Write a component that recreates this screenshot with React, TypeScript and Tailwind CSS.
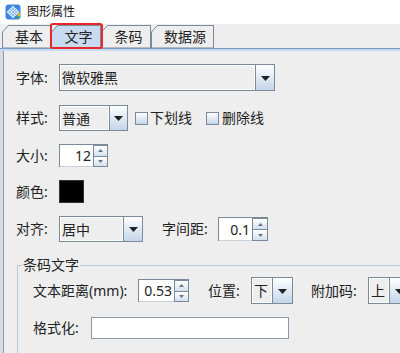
import React from "react";

function Logo() {
  return (
    <svg width="16" height="16" viewBox="0 0 16 16" className="ml-[5px] shrink-0">
      <rect x="0.5" y="0.5" width="15" height="15" rx="3" fill="#3b87de" />
      <g transform="rotate(45 8 8)">
        <rect x="3.5" y="3.5" width="9" height="9" fill="#eaf3ff" />
        <path d="M5.75 3.5V12.5M8 3.5V12.5M10.25 3.5V12.5M3.5 5.75H12.5M3.5 8H12.5M3.5 10.25H12.5" stroke="#6aa6ea" strokeWidth="0.8" />
      </g>
      <rect x="12.5" y="9" width="2.5" height="3" fill="#f2b233" />
      <rect x="12.5" y="12" width="2.5" height="2.5" fill="#4fb04a" />
    </svg>
  );
}

function Tab({ label, selected, w }: { label: string; selected?: boolean; w: string }) {
  return (
    <div className={"relative h-[23px] flex items-center justify-center pl-[5px] text-[14px] leading-none " + w}>
      <svg className="absolute inset-0 w-full h-full" preserveAspectRatio="none">
        <polygon
          points="0.5,23 0.5,7 6.5,0.5 500,0.5 500,23"
          fill={selected ? "#c8daf0" : "#eeeeee"}
          stroke="#7a8a99"
          strokeWidth="1"
        />
      </svg>
      <svg className="absolute right-0 top-0 h-full w-[1px]">
        <line x1="0.5" y1="0" x2="0.5" y2="23" stroke="#7a8a99" />
      </svg>
      <span className="relative">{label}</span>
    </div>
  );
}

function Arrow() {
  return (
    <svg width="9" height="5" viewBox="0 0 9 5" className="mt-[1px]">
      <path d="M0 0H9L4.5 5Z" fill="#222" />
    </svg>
  );
}

function SmallArrow({ up }: { up?: boolean }) {
  return (
    <svg width="5" height="3" viewBox="0 0 5 3">
      <path d={up ? "M0 3H5L2.5 0Z" : "M0 0H5L2.5 3Z"} fill="#6a7480" />
    </svg>
  );
}

function Label({ text, w }: { text: string; w: string }) {
  return <span className={"shrink-0 text-[14px] leading-none whitespace-nowrap " + w}>{text}</span>;
}

export default function App() {
  return (
    <div className="w-[400px] h-[353px] overflow-hidden bg-[#eeeeee] text-[#222222] font-['Noto_Sans','Noto_Sans_CJK_SC',sans-serif]">
      {/* title bar */}
      <div className="h-[24px] bg-white flex items-center">
        <Logo />
        <span className="ml-[6px] text-[12px] leading-none text-[#111]">图形属性</span>
      </div>

      {/* tab strip */}
      <div className="relative h-[25px] flex items-end pl-[2px] border-b border-[#7d97c4]">
        <Tab label="基本" w="w-[49px]" />
        <Tab label="文字" w="w-[50px]" selected />
        <Tab label="条码" w="w-[50px]" />
        <Tab label="数据源" w="w-[63px]" />
        <div className="absolute left-[50px] top-[-1px] w-[53px] h-[26px] border-2 border-[#e8262b] rounded-[3px]" />
      </div>

      {/* content */}
      <div className="h-[304px] border-t-2 border-[#c8daf0] flex">
        <div className="w-[3px] shrink-0 bg-[#d8dce2]" />
        <div className="flex-1 border-l border-[#8a9ab0] flex flex-col">
          {/* 字体 */}
          <div className="mt-[13px] h-[27px] flex items-center pl-[12px]">
            <Label text="字体:" w="w-[43px]" />
            <div className="w-[216px] h-[27px] flex border border-[#7a8a99]">
              <div className="flex-1 flex items-center pl-[2px] text-[14px] bg-[#eeeeee] shadow-[inset_1px_1px_0_#ffffff,inset_-1px_-1px_0_#ffffff]">微软雅黑</div>
              <div className="w-[19px] flex items-center justify-center border-l border-[#7a8a99] bg-linear-to-b from-white to-[#c3d5ea]"><Arrow /></div>
            </div>
          </div>

          {/* 样式 */}
          <div className="mt-[14px] h-[26px] flex items-center pl-[12px]">
            <Label text="样式:" w="w-[43px]" />
            <div className="w-[69px] h-[26px] flex border border-[#7a8a99]">
              <div className="flex-1 flex items-center pl-[2px] text-[14px] bg-[#eeeeee] shadow-[inset_1px_1px_0_#ffffff,inset_-1px_-1px_0_#ffffff]">普通</div>
              <div className="w-[18px] flex items-center justify-center border-l border-[#7a8a99] bg-linear-to-b from-white to-[#c3d5ea]"><Arrow /></div>
            </div>
            <div className="ml-[7px] w-[13px] h-[13px] border border-[#7a8a99] bg-linear-to-b from-white to-[#c5d6ea]" />
            <span className="ml-[2px] text-[14px] leading-none">下划线</span>
            <div className="ml-[14px] w-[13px] h-[13px] border border-[#7a8a99] bg-linear-to-b from-white to-[#c5d6ea]" />
            <span className="ml-[3px] text-[14px] leading-none">删除线</span>
          </div>

          {/* 大小 */}
          <div className="mt-[13px] h-[23px] flex items-center pl-[12px]">
            <Label text="大小:" w="w-[43px]" />
            <div className="w-[49px] h-[23px] flex border-t border-l border-[#7a8a99]">
              <div className="flex-1 flex items-center justify-end pr-[2px] text-[14px] bg-white border-b border-[#c8d0da]">12</div>
              <div className="w-[15px] flex flex-col">
                <div className="flex-1 flex items-center justify-center border border-[#7a8a99] bg-linear-to-b from-white to-[#d3e0ee]"><SmallArrow up /></div>
                <div className="flex-1 flex items-center justify-center border border-t-0 border-[#7a8a99] bg-linear-to-b from-white to-[#d3e0ee]"><SmallArrow /></div>
              </div>
            </div>
          </div>

          {/* 颜色 */}
          <div className="mt-[13px] h-[23px] flex items-center pl-[12px]">
            <Label text="颜色:" w="w-[43px]" />
            <div className="w-[25px] h-[23px] bg-black border border-[#333]" />
          </div>

          {/* 对齐 */}
          <div className="mt-[13px] h-[26px] flex items-center pl-[12px]">
            <Label text="对齐:" w="w-[43px]" />
            <div className="w-[84px] h-[26px] flex border border-[#7a8a99]">
              <div className="flex-1 flex items-center pl-[2px] text-[14px] bg-[#eeeeee] shadow-[inset_1px_1px_0_#ffffff,inset_-1px_-1px_0_#ffffff]">居中</div>
              <div className="w-[19px] flex items-center justify-center border-l border-[#7a8a99] bg-linear-to-b from-white to-[#c3d5ea]"><Arrow /></div>
            </div>
            <span className="ml-[19px] w-[56px] text-[14px] leading-none">字间距:</span>
            <div className="w-[50px] h-[24px] flex border-t border-l border-[#7a8a99]">
              <div className="flex-1 flex items-center justify-end pr-[2px] text-[14px] bg-white border-b border-[#c8d0da]">0.1</div>
              <div className="w-[16px] flex flex-col">
                <div className="flex-1 flex items-center justify-center border border-[#7a8a99] bg-linear-to-b from-white to-[#d3e0ee]"><SmallArrow up /></div>
                <div className="flex-1 flex items-center justify-center border border-t-0 border-[#7a8a99] bg-linear-to-b from-white to-[#d3e0ee]"><SmallArrow /></div>
              </div>
            </div>
          </div>

          {/* 条码文字 group */}
          <div className="relative mt-[23px] ml-[13px] flex-1 border-t border-l border-[#b8c8dc]">
            <span className="absolute left-[4px] top-[-10px] px-[1px] bg-[#eeeeee] text-[14px] leading-[18px]">条码文字</span>

            <div className="mt-[11px] h-[27px] flex items-center pl-[15px] whitespace-nowrap">
              <Label text="文本距离(mm):" w="w-[105px]" />
              <div className="shrink-0 w-[51px] h-[23px] flex border-t border-l border-[#7a8a99]">
                <div className="flex-1 flex items-center justify-end pr-[2px] text-[14px] bg-white border-b border-[#c8d0da]">0.53</div>
                <div className="w-[15px] flex flex-col">
                  <div className="flex-1 flex items-center justify-center border border-[#7a8a99] bg-linear-to-b from-white to-[#d3e0ee]"><SmallArrow up /></div>
                  <div className="flex-1 flex items-center justify-center border border-t-0 border-[#7a8a99] bg-linear-to-b from-white to-[#d3e0ee]"><SmallArrow /></div>
                </div>
              </div>
              <span className="ml-[19px] w-[43px] shrink-0 text-[14px] leading-none">位置:</span>
              <div className="shrink-0 w-[42px] h-[27px] flex border border-[#7a8a99]">
                <div className="flex-1 flex items-center pl-[2px] text-[14px] bg-[#eeeeee] shadow-[inset_1px_1px_0_#ffffff,inset_-1px_-1px_0_#ffffff]">下</div>
                <div className="w-[20px] flex items-center justify-center border-l border-[#7a8a99] bg-linear-to-b from-white to-[#c3d5ea]"><Arrow /></div>
              </div>
              <span className="ml-[18px] w-[57px] shrink-0 text-[14px] leading-none">附加码:</span>
              <div className="shrink-0 w-[42px] h-[27px] flex border border-[#7a8a99]">
                <div className="flex-1 flex items-center pl-[2px] text-[14px] bg-[#eeeeee] shadow-[inset_1px_1px_0_#ffffff,inset_-1px_-1px_0_#ffffff]">上</div>
                <div className="w-[20px] flex items-center justify-center border-l border-[#7a8a99] bg-linear-to-b from-white to-[#c3d5ea]"><Arrow /></div>
              </div>
            </div>

            <div className="mt-[13px] h-[22px] flex items-center pl-[15px]">
              <Label text="格式化:" w="w-[58px]" />
              <div className="w-[198px] h-[22px] bg-white border border-[#8a98a8]" />
            </div>
          </div>
        </div>
      </div>
    </div>
  );
}
